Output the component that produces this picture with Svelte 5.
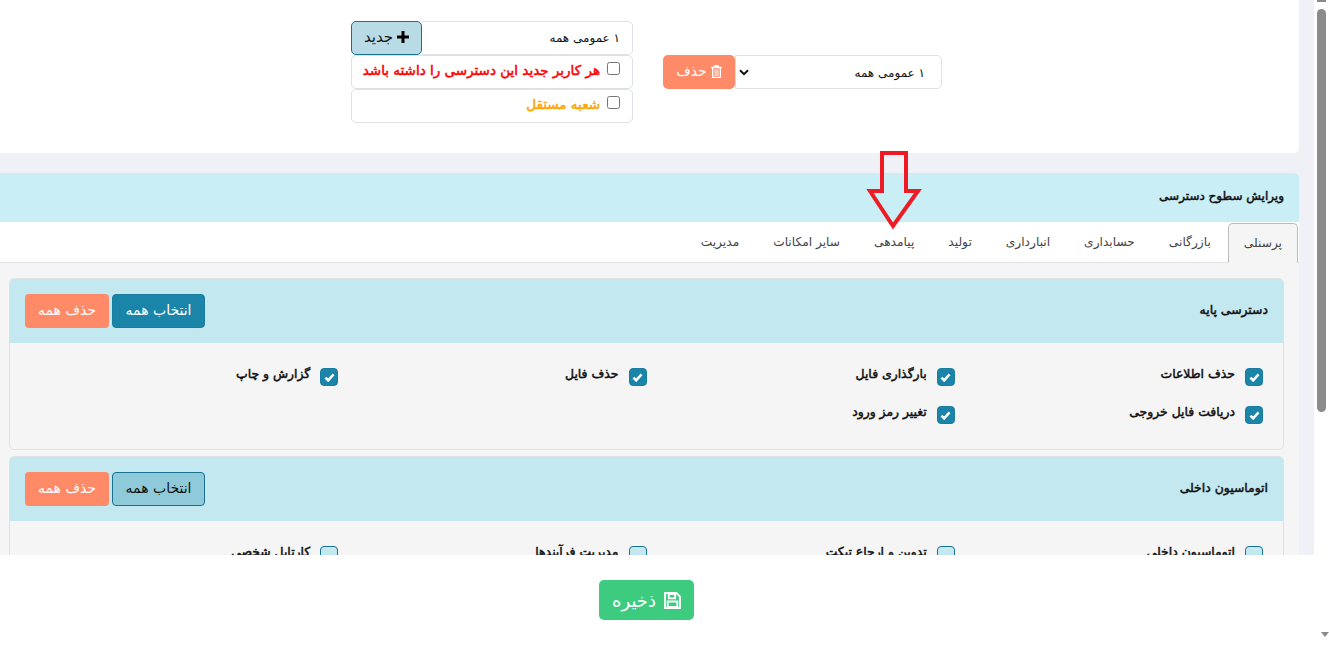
<script lang="ts">
    const tabs = ["پرسنلی", "بازرگانی", "حسابداری", "انبارداری", "تولید", "پیامدهی", "سایر امکانات", "مدیریت"];
    const sections = [
        {
            title: "دسترسی پایه",
            hover: false,
            checked: true,
            items: ["حذف اطلاعات", "بارگذاری فایل", "حذف فایل", "گزارش و چاپ", "دریافت فایل خروجی", "تغییر رمز ورود"],
        },
        {
            title: "اتوماسیون داخلی",
            hover: true,
            checked: false,
            items: ["اتوماسیون داخلی", "تدوین و ارجاع تیکت", "مدیریت فرآیندها", "کارتابل شخصی"],
        },
    ];
</script>

<div class="app">
    <div class="viewport">
        <main class="page" dir="rtl">
            <section class="top-card">
                <div class="delete-group">
                    <div class="select-box">
                        <span>۱ عمومی همه</span>
                        <svg viewBox="0 0 10 7" width="10" height="7"><path d="M1 1.2l4 4 4-4" fill="none" stroke="#111" stroke-width="2" /></svg>
                    </div>
                    <button class="btn-delete">
                        <svg viewBox="0 0 11 13" width="11" height="13"><path d="M3.500 0h4l.7 1.800H11v1.400H10V13H1V3.200H0V1.800h2.800zM2.300 3.200v8.500h6.400V3.200z" fill="#fff" fill-rule="evenodd" /><path d="M3.300 4h4.400v7H3.300z" fill="#fff" opacity=".55" /></svg>
                        حذف
                    </button>
                </div>
                <div class="new-group">
                    <div class="input-row">
                        <input class="name-input" type="text" value="۱ عمومی همه" />
                        <button class="btn-new">
                            <svg viewBox="0 0 12 12" width="12" height="12"><path d="M4.500 0h3v4.500H12v3H7.500V12h-3V7.500H0v-3h4.500z" fill="#000" /></svg>
                            جدید
                        </button>
                    </div>
                    <label class="option red"><input type="checkbox" />هر کاربر جدید این دسترسی را داشته باشد</label>
                    <label class="option orange"><input type="checkbox" />شعبه مستقل</label>
                </div>
            </section>

            <h1 class="bar">ویرایش سطوح دسترسی</h1>

            <nav class="tabs">
                {#each tabs as tab, i}
                    <span class="tab" class:active={i === 0}>{tab}</span>
                {/each}
            </nav>

            <div class="panel">
                {#each sections as section}
                    <section class="card">
                        <header class="card-head">
                            <h2>{section.title}</h2>
                            <div class="actions">
                                <button class="btn-all" class:hover={section.hover}>انتخاب همه</button>
                                <button class="btn-clear">حذف همه</button>
                            </div>
                        </header>
                        <div class="card-body">
                            {#each section.items as item}
                                <label class="perm">
                                    <span class="box" class:on={section.checked}>
                                        {#if section.checked}
                                            <svg viewBox="0 0 12 10" width="11" height="9"><path d="M1.500 5.200l3 3 6-6.600" fill="none" stroke="#fff" stroke-width="2.800" /></svg>
                                        {/if}
                                    </span>
                                    <span class="perm-text">{item}</span>
                                </label>
                            {/each}
                        </div>
                    </section>
                {/each}
            </div>

            <svg class="arrow" viewBox="0 0 56 82" width="56" height="82">
                <path d="M16 3h24v38h12L27 76 4 41h12z" fill="none" stroke="#ed1c24" stroke-width="4" />
            </svg>
        </main>

        <div class="scrollbar">
            <div class="up"></div>
            <div class="thumb"></div>
        </div>
    </div>

    <footer class="footer" dir="rtl">
        <button class="btn-save">
            <svg viewBox="0 0 16 16" width="17" height="17"><path d="M1 1h10.700L15 4.300V15H1zM4.500 2v4h6V2zM3.500 9v5h9V9z" fill="none" stroke="#fff" stroke-width="1.800" /></svg>
            ذخیره
        </button>
        <div class="scroll-end"><span class="down"></span></div>
    </footer>
</div>

<style>
    :global(body) {
        margin: 0;
        overflow: hidden;
        font-family: "DejaVu Sans", sans-serif;
        background: #fff;
    }

    button {
        font-family: inherit;
    }

    .app {
        display: flex;
        flex-direction: column;
        height: 645px;
    }

    .viewport {
        display: flex;
        height: 555px;
        overflow: hidden;
        flex: none;
    }

    .page {
        position: relative;
        width: 1314px;
        box-sizing: border-box;
        padding-right: 15px;
        background: #f0f1f7;
        flex: none;
    }

    .scrollbar {
        width: 15px;
        flex: none;
        background: #fff;
    }

    .up {
        width: 9px;
        height: 2px;
        margin-left: 3px;
        background: #8b8b8b;
    }

    .thumb {
        width: 9px;
        height: 403px;
        margin: 7px 0 0 3px;
        background: #8b8b8b;
        border-radius: 5px;
    }

    .top-card {
        height: 153px;
        box-sizing: border-box;
        background: #fff;
        padding: 21px 357px 0 0;
        display: flex;
        gap: 30px;
        border-radius: 0 0 5px 0;
    }

    .new-group {
        width: 282px;
    }

    .input-row {
        display: flex;
        height: 34px;
    }

    .name-input {
        flex: 1;
        min-width: 0;
        border: 1px solid #dee2e6;
        border-radius: 0 5px 5px 0;
        border-left: none;
        padding: 0 12px;
        font: 12px "DejaVu Sans", sans-serif;
        color: #111;
    }

    .btn-new {
        width: 71px;
        border: 1px solid #19708f;
        border-radius: 5px;
        background: #b9dbe6;
        color: #111;
        font-size: 15px;
        padding: 0 0 3px;
        display: flex;
        align-items: center;
        justify-content: center;
        gap: 4px;
    }

    .option {
        height: 34px;
        box-sizing: border-box;
        border: 1px solid #dee2e6;
        border-radius: 5px;
        display: flex;
        align-items: flex-start;
        padding: 6px 12px 0 0;
        font-size: 13.5px;
        line-height: 16px;
        -webkit-text-stroke: 0.5px currentColor;
        gap: 7px;
        white-space: nowrap;
    }

    .option input {
        margin: 0;
        width: 13px;
        height: 13px;
    }

    .red {
        color: #f00;
    }

    .orange {
        color: #ffa500;
    }

    .delete-group {
        display: flex;
        height: 34px;
        margin-top: 34px;
    }

    .select-box {
        width: 207px;
        box-sizing: border-box;
        border: 1px solid #dee2e6;
        border-radius: 0 5px 5px 0;
        display: flex;
        align-items: center;
        justify-content: space-between;
        padding: 1px 16px 0 3px;
        font-size: 12px;
        color: #111;
    }

    .btn-delete {
        width: 72px;
        border: none;
        border-radius: 5px;
        background: #ff8a68;
        color: #fff;
        font-size: 14px;
        display: flex;
        align-items: center;
        justify-content: center;
        gap: 4px;
        padding: 0 0 2px;
    }

    .bar {
        height: 49px;
        box-sizing: border-box;
        margin: 20px 0 0;
        padding: 0 15px 3px;
        background: #c9eef6;
        display: flex;
        align-items: center;
        font-size: 12px;
        font-weight: 400;
        -webkit-text-stroke: 0.5px currentColor;
        color: #111;
        border-radius: 0 5px 0 0;
    }

    .tabs {
        height: 41px;
        box-sizing: border-box;
        background: #fff;
        border-bottom: 1px solid #dee2e6;
        display: flex;
        padding-right: 1px;
    }

    .tab {
        height: 40px;
        box-sizing: border-box;
        padding: 0 16px;
        border: 1px solid transparent;
        font-size: 12.2px;
        color: #444;
        display: flex;
        align-items: center;
        white-space: nowrap;
    }

    .tab.active {
        background: #f5f5f5;
        border-color: #bbb #bbb #f5f5f5;
        border-radius: 5px 5px 0 0;
        margin-top: 1px;
        padding: 0 15px;
    }

    .panel {
        box-sizing: border-box;
        background: #f5f5f5;
        padding: 15px 15px 0 9px;
        height: 292px;
    }

    .card {
        border: 1px solid #dee2e6;
        border-radius: 5px;
        margin-bottom: 6px;
        overflow: hidden;
    }

    .card-head {
        height: 64px;
        background: #c4e8f0;
        display: flex;
        align-items: center;
        justify-content: space-between;
        padding: 0 15px;
    }

    .card-head h2 {
        margin: 0;
        padding-bottom: 3px;
        font-size: 12.4px;
        font-weight: 400;
        -webkit-text-stroke: 0.5px currentColor;
        color: #111;
    }

    .actions {
        display: flex;
        gap: 3px;
    }

    .actions button {
        height: 34px;
        font-size: 14px;
        border-radius: 4px;
        padding: 0 0 2px;
    }

    .btn-all {
        width: 93px;
        background: #1a85a8;
        color: #fff;
        border: 1px solid #1a7c9e;
    }

    .btn-all.hover {
        background: #8fcadb;
        color: #111;
        border-color: #19708f;
    }

    .btn-clear {
        width: 84px;
        background: #ff8a68;
        color: #fff;
        border: none;
    }

    .card-body {
        display: grid;
        grid-template-columns: repeat(4, 1fr);
        grid-auto-rows: 38px;
        padding: 25px 20px 5px;
    }

    .perm {
        display: flex;
        align-items: flex-start;
        gap: 10px;
        font-size: 12.4px;
        -webkit-text-stroke: 0.5px currentColor;
        color: #111;
    }

    .box {
        width: 18px;
        height: 18px;
        box-sizing: border-box;
        border: 1px solid #19708f;
        border-radius: 4px;
        background: #c4e8f0;
        display: flex;
        align-items: center;
        justify-content: center;
        flex: none;
    }

    .box.on {
        background: #1a85a8;
        border-color: #1a7c9e;
    }

    .perm-text {
        margin-top: -2px;
        white-space: nowrap;
    }

    .arrow {
        position: absolute;
        left: 866px;
        top: 150px;
    }

    .footer {
        height: 90px;
        flex: none;
        display: flex;
        justify-content: center;
        align-items: flex-start;
        background: #fff;
        position: relative;
    }

    .btn-save {
        margin: 25px 36px 0 0;
        width: 95px;
        height: 40px;
        border: none;
        border-radius: 5px;
        background: #3ccb7f;
        color: #fff;
        font-size: 18px;
        display: flex;
        align-items: center;
        justify-content: center;
        gap: 8px;
        padding: 0;
    }

    .scroll-end {
        position: absolute;
        left: 1314px;
        bottom: 0;
        width: 15px;
        height: 15px;
    }

    .down {
        display: block;
        margin: 2px 0 0 3px;
        width: 0;
        border: 4px solid transparent;
        border-top: 5px solid #8b8b8b;
    }
</style>
